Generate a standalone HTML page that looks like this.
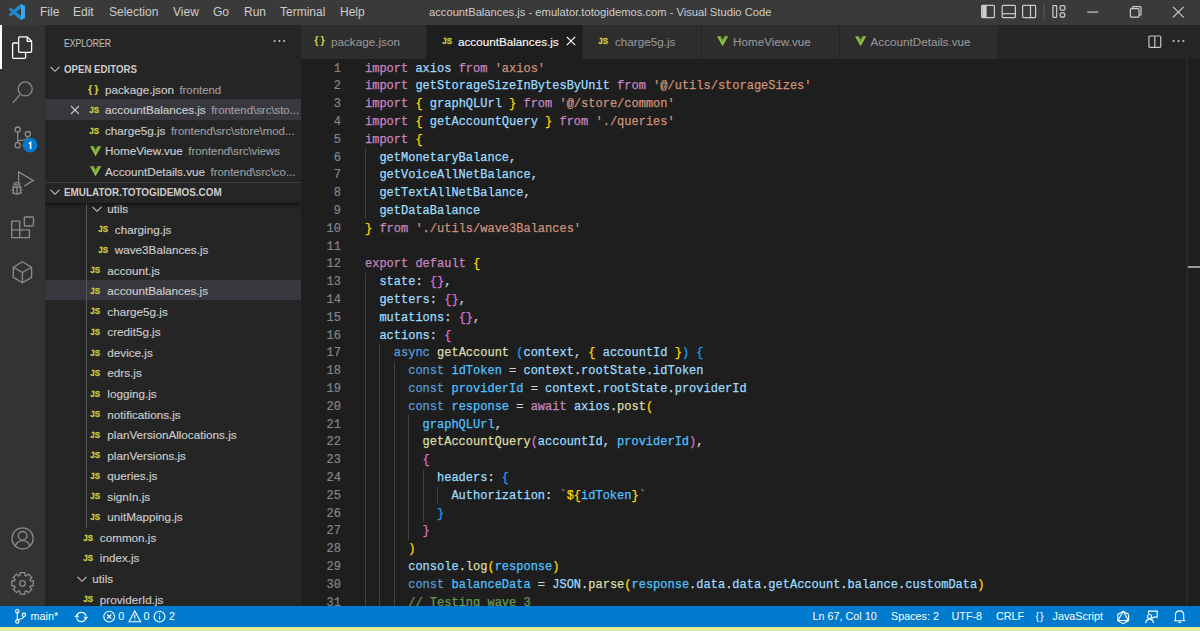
<!DOCTYPE html>
<html><head><meta charset="utf-8">
<style>
*{margin:0;padding:0;box-sizing:border-box}
html,body{width:1200px;height:631px;overflow:hidden;background:#1e1e1e;font-family:"Liberation Sans",sans-serif}
.abs{position:absolute}
#title{left:0;top:0;width:1200px;height:25px;z-index:3;background:#3a3a3a;color:#cccccc;font-size:12px}
#title .m{position:absolute;top:4px;line-height:16px}
#activity{left:0;top:24px;width:45px;height:582px;background:#333333}
#sidebar{left:45px;top:24px;width:256px;height:582px;background:#252526;color:#cccccc;overflow:hidden}
#tabs{left:301px;top:24px;width:899px;height:34.5px;background:#252526;z-index:2}
#editor{left:301px;top:58px;width:899px;height:548px;background:#1e1e1e;overflow:hidden}
#status{left:0;top:605.5px;width:1200px;height:21px;background:#007acc;color:#fff;font-size:11.5px}
.sb{position:absolute;top:0;height:21px;line-height:21px;font-size:10.8px;color:#fff;white-space:nowrap}
#strip{left:0;top:626.5px;width:1200px;height:5px;background:#e4ea98}
.ic{position:absolute;display:block}
.lb{position:absolute;height:20.56px;line-height:20.56px;font-size:11.7px;white-space:nowrap;color:#cccccc;margin-top:0.7px;-webkit-text-stroke:0.15px}
.desc{color:#9e9e9e;font-size:11.4px;margin-left:5.5px}
.br{position:absolute;font-size:11px;line-height:16px;color:#cbcb41;font-weight:bold;letter-spacing:-0.5px}
.etitle{position:absolute;font-size:10.4px;line-height:16px;color:#bbbbbb;transform:scaleX(0.83);transform-origin:0 0;-webkit-text-stroke:0.1px}
.dots{position:absolute;font-size:14px;line-height:18px;color:#c5c5c5;font-weight:bold;letter-spacing:-1px}
.hd{position:absolute;height:20.56px;line-height:20.56px;font-size:11px;font-weight:bold;color:#cccccc;white-space:nowrap;transform:scaleX(0.90);transform-origin:0 0}
.hl{position:absolute;left:0;width:256px;height:20.7px;background:#37373d}
.ig{position:absolute;width:1px;background:#585858}
.eh{position:absolute;left:0;width:256px;height:21px;background:#252526;border-top:1px solid #3c3c3c;box-shadow:0 2px 3px rgba(0,0,0,0.5)}
.row{position:absolute;left:0;width:256px;height:20.56px;line-height:20.56px;font-size:11.8px;white-space:nowrap}
.js{position:absolute;font-weight:bold;color:#cbcb41;font-size:9px;letter-spacing:-0.3px}
.code{position:absolute;left:64px;top:2.6px;font-family:"Liberation Mono",monospace;font-size:12px;line-height:17.8px;white-space:pre;color:#d4d4d4;-webkit-text-stroke:0.25px}
.code i{font-style:normal}
.lns{position:absolute;left:0;top:2.6px;width:40px;text-align:right;font-family:"Liberation Mono",monospace;font-size:12px;line-height:17.8px;white-space:pre;color:#858585;-webkit-text-stroke:0.2px}
.g{position:absolute;width:1px;background:#404040}
.k{color:#c586c0}.s{color:#569cd6}.v{color:#9cdcfe}.c{color:#4fc1ff}.f{color:#dcdcaa}.st{color:#ce9178}.cm{color:#6a9955}
.b1{color:#ffd700}.b2{color:#da70d6}.b3{color:#179fff}
.tab{position:absolute;top:0;height:34.5px;background:#2d2d2d;border-right:1px solid #252526}
.tab.act{background:#1e1e1e}
.tl{position:absolute;top:1px;height:34px;line-height:34px;font-size:11.7px;color:#969696;white-space:nowrap;-webkit-text-stroke:0.1px}
</style></head>
<body>
<div id="title" class="abs">
  <svg class="abs" style="left:9px;top:3.5px" width="16" height="16" viewBox="0 0 100 100">
<path d="M96.46 10.8L75.86.87a6.23 6.23 0 0 0-7.1 1.21L29.55 37.85 12.47 24.88a4.160 4.16 0 0 0-5.32.24l-5.48 5a4.16 4.16 0 0 0 0 6.15L16.49 50 1.670 63.52a4.160 4.16 0 0 0 0 6.15l5.48 5a4.16 4.16 0 0 0 5.32.24l17.08-13L68.76 97.9a6.23 6.23 0 0 0 7.1 1.21l20.6-9.92a6.25 6.25 0 0 0 3.54-5.63V16.43a6.25 6.25 0 0 0-3.540-5.630zM75 72.7L45.11 50 75 27.3z" fill="#1f8ad2"/>
<path d="M75 0.5L96.46 10.8a6.25 6.25 0 0 1 3.54 5.63V83.57a6.25 6.25 0 0 1-3.54 5.63L75 99.5Z" fill="#3aa4ec"/>
</svg>
<svg class="abs" style="left:975px;top:0" width="225" height="24" viewBox="975 0 225 24">
<g fill="none" stroke="#cccccc" stroke-width="1.2">
<rect x="981.6" y="5.4" width="12.8" height="12.2" rx="1"/>
<rect x="1002.2" y="5.4" width="13.2" height="12.2" rx="1"/>
<path d="M1002.2 13.7H1015.4"/>
<rect x="1022.6" y="5.4" width="13" height="12.2" rx="1"/>
<path d="M1030.5 5.4V17.6"/>
<rect x="1052.9" y="5.6" width="3.8" height="11.8" rx="0.8"/>
<rect x="1060.1" y="5.6" width="4.8" height="4.6" rx="1.2"/>
<circle cx="1062.5" cy="14.9" r="2.3"/>
<path d="M1087.3 12.1H1098.3"/>
<rect x="1130.4" y="8.6" width="8.6" height="8.6" rx="1"/>
<path d="M1132.4 8.6V7.6Q1132.4 6.6 1133.4 6.6H1140Q1141 6.6 1141 7.6V14.2Q1141 15.2 1140 15.2H1139"/>
<path d="M1173 6.8L1183.6 17.4M1183.6 6.8L1173 17.4"/>
</g>
<rect x="982.2" y="6" width="4.4" height="11" fill="#cccccc"/>
<rect x="1043.4" y="3.8" width="1.1" height="15.4" fill="#5a5a5a"/>
</svg>
  <span class="m" style="left:40px">File</span>
  <span class="m" style="left:73px">Edit</span>
  <span class="m" style="left:109px">Selection</span>
  <span class="m" style="left:173px">View</span>
  <span class="m" style="left:213px">Go</span>
  <span class="m" style="left:244px">Run</span>
  <span class="m" style="left:280px">Terminal</span>
  <span class="m" style="left:340px">Help</span>
  <span class="m" style="left:429px;font-size:11.2px">accountBalances.js - emulator.totogidemos.com - Visual Studio Code</span>
</div>
<div id="activity" class="abs"></div>
<svg class="abs" style="left:0;top:0" width="45" height="606" viewBox="0 0 45 606">
<rect x="0" y="24" width="2" height="45" fill="#ffffff"/>
<g fill="none" stroke="#ffffff" stroke-width="1.3" stroke-linejoin="round">
<path d="M17.9 43H13.6Q12.6 43 12.6 44V57.3Q12.6 58.3 13.6 58.3H24.6Q25.6 58.3 25.6 57.3V52.6"/>
<path d="M19.6 36.9H27.3L31.6 41.2V51.3Q31.6 52.3 30.6 52.3H19.6Q18.6 52.3 18.6 51.3V37.9Q18.6 36.9 19.6 36.9Z"/>
<path d="M27.2 37V41.3H31.5"/>
</g>
<g fill="none" stroke="#8b8b8b" stroke-width="1.3">
<circle cx="25.2" cy="88.9" r="7"/>
<path d="M20.2 94.3L12.8 102.9"/>
<circle cx="17.7" cy="129.6" r="2.6"/>
<circle cx="17.7" cy="145.3" r="2.6"/>
<circle cx="27.8" cy="134.1" r="2.6"/>
<path d="M17.7 132.2V142.7M27.8 136.7Q27.6 140.6 17.7 140.6"/>
<path d="M18.6 182.3V171.9L33.2 180.4 24.3 186"/>
<path d="M13.5 184.8H20.4M12.2 187H21.7M11.5 190.2H13.5M20.4 190.2H22.5M12.2 193.6L13.7 192.3M21.7 193.6L20.3 192.3M14 184.5Q14 182.6 16.95 182.6Q19.9 182.6 19.9 184.5M13.4 186.2V191Q13.4 194 16.95 194Q20.5 194 20.5 191V186.2M16.95 187.5V193.8"/>
<path d="M11.7 221.2H19.7V229.9H29.4V237.6H11.7Z M11.7 229.9H19.7V237.6"/>
<rect x="24.3" y="217" width="9.2" height="9" rx="1.2"/>
<path d="M22.4 261.8L31.6 267.3V277.3L22.4 282.8L13.3 277.3V267.3Z M13.3 267.3L22.4 272.6L31.6 267.3 M22.4 272.6V282.8"/>
<circle cx="22.6" cy="538.4" r="10.6"/>
<circle cx="22.6" cy="535.8" r="4.3"/>
<path d="M15.3 546.4Q16.8 540.7 22.6 540.7Q28.4 540.7 29.9 546.4"/>
<path d="M30.26 580.19 L30.52 580.92 L33.23 581.00 L33.23 585.80 L30.52 585.88 L30.26 586.61 L29.93 587.32 L31.79 589.29 L28.39 592.69 L26.42 590.83 L25.71 591.16 L24.98 591.42 L24.90 594.13 L20.10 594.13 L20.02 591.42 L19.29 591.16 L18.58 590.83 L16.61 592.69 L13.21 589.29 L15.07 587.32 L14.74 586.61 L14.48 585.88 L11.77 585.80 L11.77 581.00 L14.48 580.92 L14.74 580.19 L15.07 579.48 L13.21 577.51 L16.61 574.11 L18.58 575.97 L19.29 575.64 L20.02 575.38 L20.10 572.67 L24.90 572.67 L24.98 575.38 L25.71 575.64 L26.42 575.97 L28.39 574.11 L31.79 577.51 L29.93 579.48Z"/>
<circle cx="22.5" cy="583.4" r="2.8"/>
</g>
<circle cx="30.1" cy="145.1" r="7.4" fill="#007acc"/>
<path d="M28.9 143.9L30.6 142.6V148.9" fill="none" stroke="#fff" stroke-width="1.5"/>
</svg>
<div id="sidebar" class="abs">
<span class="etitle" style="left:19.0px;top:11.6px">EXPLORER</span>
<svg class="ic" style="left:228.0px;top:15.1px" width="14" height="4" viewBox="0 0 14 4"><circle cx="1.6" cy="2" r="1.05" fill="#c5c5c5"/><circle cx="6.4" cy="2" r="1.05" fill="#c5c5c5"/><circle cx="11.1" cy="2" r="1.05" fill="#c5c5c5"/></svg>
<svg class="ic" style="left:4.0px;top:39.0px" width="12" height="12" viewBox="0 0 12 12"><path d="M1.5 3.8L6 8.3 10.5 3.8" stroke="#c5c5c5" stroke-width="1.1" fill="none"/></svg>
<span class="hd" style="left:19.0px;top:34.7px;transform:scaleX(0.88)">OPEN EDITORS</span>
<span class="br" style="left:43.0px;top:57.4px">{ }</span>
<span class="lb" style="left:60.0px;top:55.1px">package.json<span class="desc">frontend</span></span>
<div class="hl" style="top:75.20px"></div>
<svg class="ic" style="left:25.3px;top:81.0px" width="10" height="10" viewBox="0 0 10 10"><path d="M1 1L9 9M9 1L1 9" stroke="#c5c5c5" stroke-width="1.1"/></svg>
<svg class="ic" style="left:44.0px;top:81.0px" width="11" height="10" viewBox="0 0 11 10"><text x="0.2" y="8.3" textLength="9.8" lengthAdjust="spacingAndGlyphs" font-family="Liberation Sans" font-weight="bold" font-size="9.6" fill="#cbcb41" stroke="#cbcb41" stroke-width="0.3">JS</text></svg>
<span class="lb" style="left:60.0px;top:75.7px">accountBalances.js<span class="desc">frontend\src\sto...</span></span>
<svg class="ic" style="left:44.0px;top:101.5px" width="11" height="10" viewBox="0 0 11 10"><text x="0.2" y="8.3" textLength="9.8" lengthAdjust="spacingAndGlyphs" font-family="Liberation Sans" font-weight="bold" font-size="9.6" fill="#cbcb41" stroke="#cbcb41" stroke-width="0.3">JS</text></svg>
<span class="lb" style="left:60.0px;top:96.2px">charge5g.js<span class="desc">frontend\src\store\mod...</span></span>
<svg class="ic" style="left:44.5px;top:121.8px" width="12" height="11" viewBox="0 0 12 11"><path d="M0 0.3H3.6L5.6 3.8 7.6 0.3H11.2L5.6 10.3Z" fill="#8dc149"/><path d="M2 0.3H3.6L5.6 3.8 7.6 0.3H9.2L5.6 6.6Z" fill="#6a9a2f"/></svg>
<span class="lb" style="left:60.0px;top:116.8px">HomeView.vue<span class="desc">frontend\src\views</span></span>
<svg class="ic" style="left:44.5px;top:142.3px" width="12" height="11" viewBox="0 0 12 11"><path d="M0 0.3H3.6L5.6 3.8 7.6 0.3H11.2L5.6 10.3Z" fill="#8dc149"/><path d="M2 0.3H3.6L5.6 3.8 7.6 0.3H9.2L5.6 6.6Z" fill="#6a9a2f"/></svg>
<span class="lb" style="left:60.0px;top:137.4px">AccountDetails.vue<span class="desc">frontend\src\co...</span></span>
<svg class="ic" style="left:45.8px;top:178.6px" width="12" height="12" viewBox="0 0 12 12"><path d="M1.5 3.8L6 8.3 10.5 3.8" stroke="#c5c5c5" stroke-width="1.1" fill="none"/></svg>
<span class="lb" style="left:62.3px;top:174.3px">utils</span>
<svg class="ic" style="left:52.9px;top:200.2px" width="11" height="10" viewBox="0 0 11 10"><text x="0.2" y="8.3" textLength="9.8" lengthAdjust="spacingAndGlyphs" font-family="Liberation Sans" font-weight="bold" font-size="9.6" fill="#cbcb41" stroke="#cbcb41" stroke-width="0.3">JS</text></svg>
<span class="lb" style="left:69.8px;top:194.9px">charging.js</span>
<svg class="ic" style="left:52.9px;top:220.7px" width="11" height="10" viewBox="0 0 11 10"><text x="0.2" y="8.3" textLength="9.8" lengthAdjust="spacingAndGlyphs" font-family="Liberation Sans" font-weight="bold" font-size="9.6" fill="#cbcb41" stroke="#cbcb41" stroke-width="0.3">JS</text></svg>
<span class="lb" style="left:69.8px;top:215.4px">wave3Balances.js</span>
<svg class="ic" style="left:45.4px;top:241.3px" width="11" height="10" viewBox="0 0 11 10"><text x="0.2" y="8.3" textLength="9.8" lengthAdjust="spacingAndGlyphs" font-family="Liberation Sans" font-weight="bold" font-size="9.6" fill="#cbcb41" stroke="#cbcb41" stroke-width="0.3">JS</text></svg>
<span class="lb" style="left:62.3px;top:236.0px">account.js</span>
<div class="hl" style="top:255.70px"></div>
<svg class="ic" style="left:45.4px;top:261.8px" width="11" height="10" viewBox="0 0 11 10"><text x="0.2" y="8.3" textLength="9.8" lengthAdjust="spacingAndGlyphs" font-family="Liberation Sans" font-weight="bold" font-size="9.6" fill="#cbcb41" stroke="#cbcb41" stroke-width="0.3">JS</text></svg>
<span class="lb" style="left:62.3px;top:256.6px">accountBalances.js</span>
<svg class="ic" style="left:45.4px;top:282.4px" width="11" height="10" viewBox="0 0 11 10"><text x="0.2" y="8.3" textLength="9.8" lengthAdjust="spacingAndGlyphs" font-family="Liberation Sans" font-weight="bold" font-size="9.6" fill="#cbcb41" stroke="#cbcb41" stroke-width="0.3">JS</text></svg>
<span class="lb" style="left:62.3px;top:277.1px">charge5g.js</span>
<svg class="ic" style="left:45.4px;top:303.0px" width="11" height="10" viewBox="0 0 11 10"><text x="0.2" y="8.3" textLength="9.8" lengthAdjust="spacingAndGlyphs" font-family="Liberation Sans" font-weight="bold" font-size="9.6" fill="#cbcb41" stroke="#cbcb41" stroke-width="0.3">JS</text></svg>
<span class="lb" style="left:62.3px;top:297.7px">credit5g.js</span>
<svg class="ic" style="left:45.4px;top:323.5px" width="11" height="10" viewBox="0 0 11 10"><text x="0.2" y="8.3" textLength="9.8" lengthAdjust="spacingAndGlyphs" font-family="Liberation Sans" font-weight="bold" font-size="9.6" fill="#cbcb41" stroke="#cbcb41" stroke-width="0.3">JS</text></svg>
<span class="lb" style="left:62.3px;top:318.2px">device.js</span>
<svg class="ic" style="left:45.4px;top:344.1px" width="11" height="10" viewBox="0 0 11 10"><text x="0.2" y="8.3" textLength="9.8" lengthAdjust="spacingAndGlyphs" font-family="Liberation Sans" font-weight="bold" font-size="9.6" fill="#cbcb41" stroke="#cbcb41" stroke-width="0.3">JS</text></svg>
<span class="lb" style="left:62.3px;top:338.8px">edrs.js</span>
<svg class="ic" style="left:45.4px;top:364.6px" width="11" height="10" viewBox="0 0 11 10"><text x="0.2" y="8.3" textLength="9.8" lengthAdjust="spacingAndGlyphs" font-family="Liberation Sans" font-weight="bold" font-size="9.6" fill="#cbcb41" stroke="#cbcb41" stroke-width="0.3">JS</text></svg>
<span class="lb" style="left:62.3px;top:359.4px">logging.js</span>
<svg class="ic" style="left:45.4px;top:385.2px" width="11" height="10" viewBox="0 0 11 10"><text x="0.2" y="8.3" textLength="9.8" lengthAdjust="spacingAndGlyphs" font-family="Liberation Sans" font-weight="bold" font-size="9.6" fill="#cbcb41" stroke="#cbcb41" stroke-width="0.3">JS</text></svg>
<span class="lb" style="left:62.3px;top:379.9px">notifications.js</span>
<svg class="ic" style="left:45.4px;top:405.8px" width="11" height="10" viewBox="0 0 11 10"><text x="0.2" y="8.3" textLength="9.8" lengthAdjust="spacingAndGlyphs" font-family="Liberation Sans" font-weight="bold" font-size="9.6" fill="#cbcb41" stroke="#cbcb41" stroke-width="0.3">JS</text></svg>
<span class="lb" style="left:62.3px;top:400.5px">planVersionAllocations.js</span>
<svg class="ic" style="left:45.4px;top:426.3px" width="11" height="10" viewBox="0 0 11 10"><text x="0.2" y="8.3" textLength="9.8" lengthAdjust="spacingAndGlyphs" font-family="Liberation Sans" font-weight="bold" font-size="9.6" fill="#cbcb41" stroke="#cbcb41" stroke-width="0.3">JS</text></svg>
<span class="lb" style="left:62.3px;top:421.0px">planVersions.js</span>
<svg class="ic" style="left:45.4px;top:446.9px" width="11" height="10" viewBox="0 0 11 10"><text x="0.2" y="8.3" textLength="9.8" lengthAdjust="spacingAndGlyphs" font-family="Liberation Sans" font-weight="bold" font-size="9.6" fill="#cbcb41" stroke="#cbcb41" stroke-width="0.3">JS</text></svg>
<span class="lb" style="left:62.3px;top:441.6px">queries.js</span>
<svg class="ic" style="left:45.4px;top:467.4px" width="11" height="10" viewBox="0 0 11 10"><text x="0.2" y="8.3" textLength="9.8" lengthAdjust="spacingAndGlyphs" font-family="Liberation Sans" font-weight="bold" font-size="9.6" fill="#cbcb41" stroke="#cbcb41" stroke-width="0.3">JS</text></svg>
<span class="lb" style="left:62.3px;top:462.2px">signIn.js</span>
<svg class="ic" style="left:45.4px;top:488.0px" width="11" height="10" viewBox="0 0 11 10"><text x="0.2" y="8.3" textLength="9.8" lengthAdjust="spacingAndGlyphs" font-family="Liberation Sans" font-weight="bold" font-size="9.6" fill="#cbcb41" stroke="#cbcb41" stroke-width="0.3">JS</text></svg>
<span class="lb" style="left:62.3px;top:482.7px">unitMapping.js</span>
<svg class="ic" style="left:37.9px;top:508.6px" width="11" height="10" viewBox="0 0 11 10"><text x="0.2" y="8.3" textLength="9.8" lengthAdjust="spacingAndGlyphs" font-family="Liberation Sans" font-weight="bold" font-size="9.6" fill="#cbcb41" stroke="#cbcb41" stroke-width="0.3">JS</text></svg>
<span class="lb" style="left:54.8px;top:503.3px">common.js</span>
<svg class="ic" style="left:37.9px;top:529.1px" width="11" height="10" viewBox="0 0 11 10"><text x="0.2" y="8.3" textLength="9.8" lengthAdjust="spacingAndGlyphs" font-family="Liberation Sans" font-weight="bold" font-size="9.6" fill="#cbcb41" stroke="#cbcb41" stroke-width="0.3">JS</text></svg>
<span class="lb" style="left:54.8px;top:523.8px">index.js</span>
<svg class="ic" style="left:30.8px;top:548.7px" width="12" height="12" viewBox="0 0 12 12"><path d="M1.5 3.8L6 8.3 10.5 3.8" stroke="#c5c5c5" stroke-width="1.1" fill="none"/></svg>
<span class="lb" style="left:47.3px;top:544.4px">utils</span>
<svg class="ic" style="left:37.9px;top:570.2px" width="11" height="10" viewBox="0 0 11 10"><text x="0.2" y="8.3" textLength="9.8" lengthAdjust="spacingAndGlyphs" font-family="Liberation Sans" font-weight="bold" font-size="9.6" fill="#cbcb41" stroke="#cbcb41" stroke-width="0.3">JS</text></svg>
<span class="lb" style="left:54.8px;top:565.0px">providerId.js</span>
<div class="ig" style="left:41.0px;top:178.0px;height:325.5px"></div>
<div class="eh" style="top:158.00px"></div>
<svg class="ic" style="left:4.0px;top:162.3px" width="12" height="12" viewBox="0 0 12 12"><path d="M1.5 3.8L6 8.3 10.5 3.8" stroke="#c5c5c5" stroke-width="1.1" fill="none"/></svg>
<span class="hd" style="left:19.0px;top:158.0px">EMULATOR.TOTOGIDEMOS.COM</span>
</div>
<div id="tabs" class="abs">
<div class="tab" style="left:0;width:126px"></div>
<div class="tab act" style="left:126px;width:156px"></div>
<div class="tab" style="left:282px;width:119px"></div>
<div class="tab" style="left:401px;width:138px"></div>
<div class="tab" style="left:539px;width:159px"></div>
<span class="br" style="left:13.2px;top:8.2px">{ }</span><span class="tl" style="left:30.0px">package.json</span><svg class="ic" style="left:141.0px;top:12.0px" width="11" height="10" viewBox="0 0 11 10"><text x="0.2" y="8.3" textLength="9.8" lengthAdjust="spacingAndGlyphs" font-family="Liberation Sans" font-weight="bold" font-size="9.6" fill="#cbcb41" stroke="#cbcb41" stroke-width="0.3">JS</text></svg><span class="tl" style="left:157.0px;color:#ffffff">accountBalances.js</span><svg class="ic" style="left:265.0px;top:12.0px" width="10" height="10" viewBox="0 0 10 10"><path d="M0.8 0.8L9.2 9.2M9.2 0.8L0.8 9.2" stroke="#ffffff" stroke-width="1.2"/></svg><svg class="ic" style="left:297.0px;top:12.0px" width="11" height="10" viewBox="0 0 11 10"><text x="0.2" y="8.3" textLength="9.8" lengthAdjust="spacingAndGlyphs" font-family="Liberation Sans" font-weight="bold" font-size="9.6" fill="#cbcb41" stroke="#cbcb41" stroke-width="0.3">JS</text></svg><span class="tl" style="left:314.0px">charge5g.js</span><svg class="ic" style="left:416.0px;top:11.7px" width="12" height="11" viewBox="0 0 12 11"><path d="M0 0.3H3.6L5.6 3.8 7.6 0.3H11.2L5.6 10.3Z" fill="#8dc149"/><path d="M2 0.3H3.6L5.6 3.8 7.6 0.3H9.2L5.6 6.6Z" fill="#6a9a2f"/></svg><span class="tl" style="left:432.0px">HomeView.vue</span><svg class="ic" style="left:554.0px;top:11.7px" width="12" height="11" viewBox="0 0 12 11"><path d="M0 0.3H3.6L5.6 3.8 7.6 0.3H11.2L5.6 10.3Z" fill="#8dc149"/><path d="M2 0.3H3.6L5.6 3.8 7.6 0.3H9.2L5.6 6.6Z" fill="#6a9a2f"/></svg><span class="tl" style="left:569.5px">AccountDetails.vue</span><svg class="ic" style="left:847.0px;top:11.0px" width="14" height="14" viewBox="0 0 14 14"><rect x="0.9" y="1" width="11.8" height="11.4" rx="1" fill="none" stroke="#c5c5c5" stroke-width="1.2"/><path d="M6.8 1V12.4" stroke="#c5c5c5" stroke-width="1.2"/></svg><svg class="ic" style="left:871.0px;top:14.0px" width="14" height="6" viewBox="0 0 14 6"><circle cx="1.6" cy="3" r="1.1" fill="#c5c5c5"/><circle cx="6.5" cy="3" r="1.1" fill="#c5c5c5"/><circle cx="11.4" cy="3" r="1.1" fill="#c5c5c5"/></svg>
</div>
<div id="editor" class="abs">
<div class="lns">1
2
3
4
5
6
7
8
9
10
11
12
13
14
15
16
17
18
19
20
21
22
23
24
25
26
27
28
29
30
31</div>
<div class="g" style="left:64.00px;top:90.30px;height:71.20px"></div>
<div class="g" style="left:64.00px;top:214.90px;height:338.20px"></div>
<div class="g" style="left:78.40px;top:286.10px;height:267.00px"></div>
<div class="g" style="left:92.80px;top:303.90px;height:249.20px"></div>
<div class="g" style="left:107.20px;top:357.30px;height:124.60px"></div>
<div class="g" style="left:121.60px;top:410.70px;height:53.40px"></div>
<div class="g" style="left:136.00px;top:428.50px;height:17.80px"></div>
<div class="code"><i class="k">import</i> <i class="v">axios</i> <i class="k">from</i> <i class="st">'axios'</i>
<i class="k">import</i> <i class="v">getStorageSizeInBytesByUnit</i> <i class="k">from</i> <i class="st">'@/utils/storageSizes'</i>
<i class="k">import</i> <i class="b1">{</i> <i class="v">graphQLUrl</i> <i class="b1">}</i> <i class="k">from</i> <i class="st">'@/store/common'</i>
<i class="k">import</i> <i class="b1">{</i> <i class="v">getAccountQuery</i> <i class="b1">}</i> <i class="k">from</i> <i class="st">'./queries'</i>
<i class="k">import</i> <i class="b1">{</i>
  <i class="v">getMonetaryBalance</i>,
  <i class="v">getVoiceAllNetBalance</i>,
  <i class="v">getTextAllNetBalance</i>,
  <i class="v">getDataBalance</i>
<i class="b1">}</i> <i class="k">from</i> <i class="st">'./utils/wave3Balances'</i>

<i class="k">export</i> <i class="k">default</i> <i class="b1">{</i>
  <i class="v">state</i>: <i class="b2">{}</i>,
  <i class="v">getters</i>: <i class="b2">{}</i>,
  <i class="v">mutations</i>: <i class="b2">{}</i>,
  <i class="v">actions</i>: <i class="b2">{</i>
    <i class="s">async</i> <i class="f">getAccount</i> <i class="b3">(</i><i class="v">context</i>, <i class="b1">{</i> <i class="v">accountId</i> <i class="b1">}</i><i class="b3">)</i> <i class="b3">{</i>
      <i class="s">const</i> <i class="c">idToken</i> = <i class="v">context</i>.<i class="v">rootState</i>.<i class="v">idToken</i>
      <i class="s">const</i> <i class="c">providerId</i> = <i class="v">context</i>.<i class="v">rootState</i>.<i class="v">providerId</i>
      <i class="s">const</i> <i class="c">response</i> = <i class="k">await</i> <i class="v">axios</i>.<i class="f">post</i><i class="b1">(</i>
        <i class="c">graphQLUrl</i>,
        <i class="f">getAccountQuery</i><i class="b2">(</i><i class="v">accountId</i>, <i class="c">providerId</i><i class="b2">)</i>,
        <i class="b2">{</i>
          <i class="v">headers</i>: <i class="b3">{</i>
            <i class="v">Authorization</i>: <i class="st">`</i><i class="b1">${</i><i class="c">idToken</i><i class="b1">}</i><i class="st">`</i>
          <i class="b3">}</i>
        <i class="b2">}</i>
      <i class="b1">)</i>
      <i class="v">console</i>.<i class="f">log</i><i class="b1">(</i><i class="c">response</i><i class="b1">)</i>
      <i class="s">const</i> <i class="c">balanceData</i> = <i class="v">JSON</i>.<i class="f">parse</i><i class="b1">(</i><i class="c">response</i>.<i class="v">data</i>.<i class="v">data</i>.<i class="v">getAccount</i>.<i class="v">balance</i>.<i class="v">customData</i><i class="b1">)</i>
      <i class="cm">// Testing wave 3</i></div>
</div>
<div class="abs" style="left:1186px;top:59px;width:2px;height:547px;background:#282828"></div>
<div class="abs" style="left:1188px;top:266.3px;width:12px;height:2px;background:#9a9a9a"></div>
<div id="status" class="abs">
<svg class="abs" style="left:0;top:0" width="1200" height="21" viewBox="0 605.5 1200 21">
<g fill="none" stroke="#ffffff" stroke-width="1.1">
<circle cx="17.3" cy="610.7" r="1.7"/>
<circle cx="17.3" cy="621.1" r="1.7"/>
<circle cx="23.9" cy="614.3" r="1.7"/>
<path d="M17.3 612.4V619.4M23.9 616Q23.8 618.2 17.5 619.2"/>
<path d="M76.6 615.2A5 5 0 0 1 86 615.2M86 617.8A5 5 0 0 1 76.6 617.8"/>
<path d="M74.8 616.3L77 614 78.6 616.6Z M87.8 616.7L85.6 619 84 616.4Z" fill="#fff" stroke-width="0.6"/>
<circle cx="109.2" cy="616.1" r="5.4"/>
<path d="M107.1 614L111.3 618.2M111.3 614L107.1 618.2"/>
<path d="M134.8 610.5L140.6 621.3H129Z"/>
<path d="M134.8 614V618M134.8 619.2V620"/>
<circle cx="159.6" cy="616.1" r="5.4"/>
<path d="M159.6 615.2V619.2M159.6 612.8V613.7"/>
</g>
<g fill="none" stroke="#ffffff" stroke-width="1.1">
<path d="M1123.2 610.8L1128.6 613.9V620.1L1123.2 623.2L1117.8 620.1V613.9Z"/>
<path d="M1123.2 610.8L1128.4 620H1118Z"/>
<circle cx="1149.6" cy="616" r="2"/>
<path d="M1145.6 622.6Q1146.2 618.6 1149.6 618.6Q1153 618.6 1153.6 622.6"/>
<path d="M1148.6 613.3V610.6H1157.2V616.6H1153.6L1152.2 618"/>
<path d="M1175.5 619V614.6Q1175.5 610.4 1179.6 610.4Q1183.7 610.4 1183.7 614.6V619L1184.5 620.3H1174.7Z M1178.4 621.9H1180.8"/>
</g>
</svg>
<span class="sb" style="left:30.5px">main*</span>
<span class="sb" style="left:118.3px">0</span>
<span class="sb" style="left:143.6px">0</span>
<span class="sb" style="left:169px">2</span>
<span class="sb" style="left:812.5px">Ln 67, Col 10</span>
<span class="sb" style="left:891px">Spaces: 2</span>
<span class="sb" style="left:951.5px">UTF-8</span>
<span class="sb" style="left:996px">CRLF</span>
<span class="sb" style="left:1035.5px;letter-spacing:1px">{}</span>
<span class="sb" style="left:1052.5px">JavaScript</span>
</div>
<div id="strip" class="abs"></div>
</body></html>
